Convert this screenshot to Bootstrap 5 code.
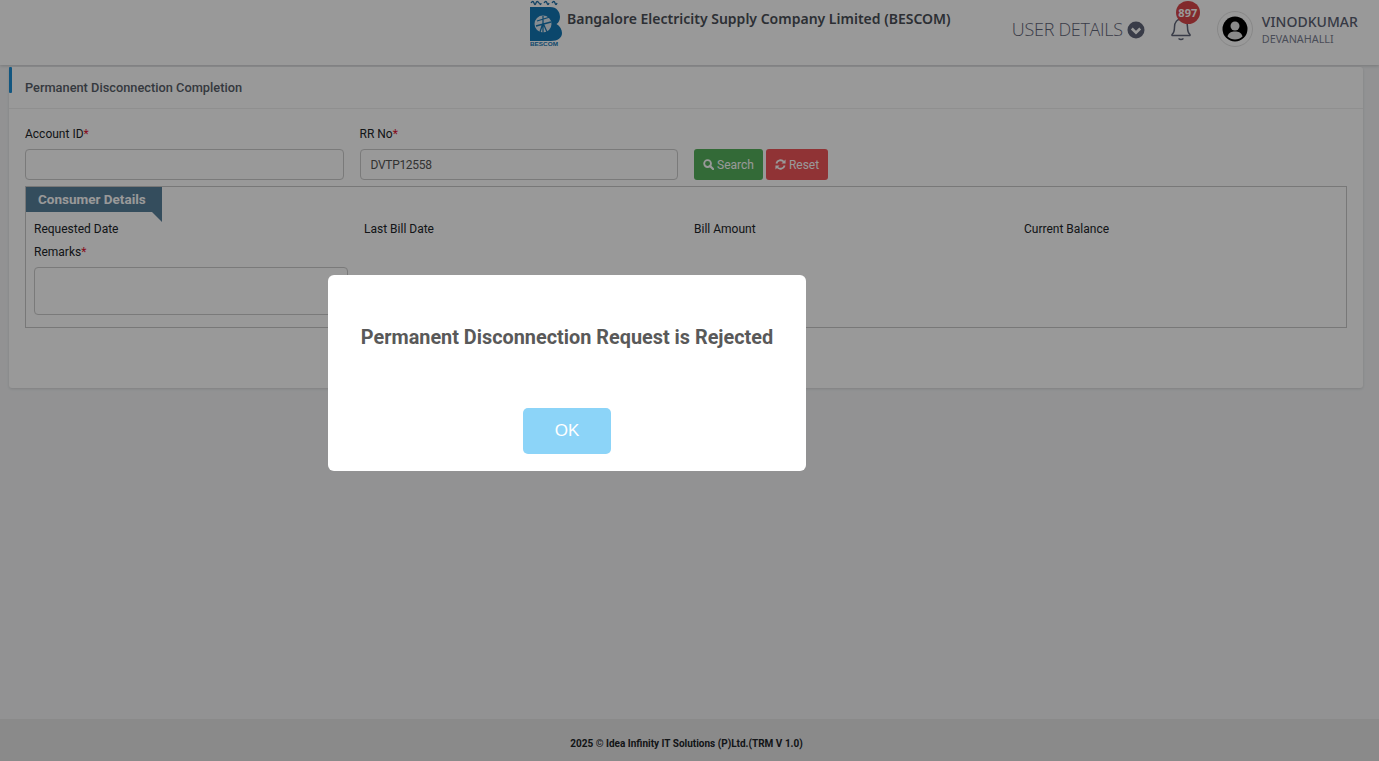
<!DOCTYPE html>
<html lang="en">
<head>
<meta charset="utf-8">
<title>Permanent Disconnection Completion</title>
<link href="https://cdn.jsdelivr.net/npm/bootstrap@5.3.0/dist/css/bootstrap.min.css" rel="stylesheet">
<style>
html,body{height:100%;}
body{background:#f3f4f6;font-family:Roboto,sans-serif;color:#212529;font-size:12px;overflow:hidden;}
.shell{height:761px;}
.topbar{height:65px;background:#fff;box-shadow:0 1px 3px rgba(0,0,0,.18);padding-left:530px;padding-right:21px;}
.logo-box{width:32px;height:46px;flex:none;}
.org-name{font-family:"Noto Sans",sans-serif;font-weight:600;font-size:14px;color:#4a4f57;margin:11px 0 0 5px;line-height:16px;white-space:nowrap;}
.user-menu{font-family:"Open Sans",sans-serif;font-size:18px;font-weight:300;color:#5f6578;margin-top:17px;letter-spacing:-.3px;line-height:25px;height:25px;}
.bell-wrap{width:24px;height:40px;margin:15px 0 0 25px;position:relative;}
.bell-count{position:absolute;left:6px;top:-14px;width:24px;height:23px;border-radius:50%;background:#d9474a;color:#fff;font:700 11px/23px "Noto Sans",sans-serif;text-align:center;}
.avatar-ring{width:36px;height:36px;border-radius:50%;border:1px solid #e2e2e2;margin:11px 9px 0 23px;flex:none;}
.who{margin-top:13px;font-family:"Noto Sans",sans-serif;}
.who-name{font-size:14px;font-weight:500;color:#5a6072;line-height:17px;letter-spacing:.05px;}
.who-place{font-size:10.8px;color:#7b8092;line-height:14px;margin-top:2px;}
.panel-area{padding:2px 16px 0 9px;}
.panel{background:#fff;border:0;border-radius:3px;box-shadow:0 1px 3px rgba(0,0,0,.12);height:321px;}
.panel-head{height:42px;border-bottom:1px solid #eee;padding:12px 16px 0;font:500 12.800px/17px Roboto,sans-serif;color:#596069;position:relative;}
.panel-head::before{content:"";position:absolute;left:0;top:0;width:3px;height:26px;background:#1f8fd6;border-radius:1px;}
.panel-main{padding:16px 16px 0;}
.field-label{font:400 12px/17px Roboto,sans-serif;color:#212529;padding-top:1px;margin-bottom:6px;display:block;}
.req{color:#e01030;}
.box-input{height:31px;border:1px solid #ccc;border-radius:4px;font:400 12px Roboto,sans-serif;letter-spacing:-.3px;padding:0 10px;color:#555;background:#fff;}
.search-row{--bs-gutter-x:16px;}
.act{height:31px;font:400 12px/33px Roboto,sans-serif;padding:0;border:0;border-radius:3px;color:#fff;margin-top:24px;}
.act-go{width:69px;background:#55b15c;margin-right:3px;}
.act-clear{width:62px;background:#f15559;}
.act svg{vertical-align:-1px;margin-right:3px;}
.details-box{border:1px solid #c9c9c9;height:142px;margin-top:6px;padding:0 8px;}
.tab-title{width:136px;height:25px;margin:0 0 0 -8px;background:#58809b;color:#fff;font:700 13.500px/24px Roboto,sans-serif;padding-left:12px;position:relative;}
.tab-title::after{content:"";position:absolute;left:126px;top:25px;border-top:10px solid #58809b;border-left:10px solid transparent;}
.detail-row{--bs-gutter-x:16px;margin-top:9px;}
.detail-name{font:400 12px/17px Roboto,sans-serif;color:#212529;}
.remark-label{margin:5px 0 6px;}
.remark-box{display:block;width:314px;height:48px;border:1px solid #ccc;border-radius:4px;background:#fff;resize:none;}
.foot{height:42px;margin-top:auto;background:#e6e6e6;text-align:center;font:700 10px/50px Roboto,sans-serif;color:#212529;}
.foot span{position:relative;left:-3px;}
.shade{position:fixed;inset:0;background:#000;opacity:.4;z-index:1050;}
.alert-box{position:absolute;left:328px;top:275px;width:478px;height:196px;background:#fff;border-radius:6px;z-index:1060;text-align:center;}
.alert-msg{font:700 19.850px/26px Roboto,sans-serif;color:#595959;margin:50px 0 0;}
.alert-ok{width:88px;height:46px;margin-top:57px;background:#8cd4f8;color:#fff;border:0;border-radius:5px;font:400 17px/46px "Liberation Sans",sans-serif;padding:0;}
</style>
</head>
<body>
<div class="shell d-flex flex-column">
  <header class="topbar d-flex">
    <div class="logo-box">
      <svg width="32" height="46" viewBox="0 0 32 46">
        <path d="M1 3q2-3 3 0t2 0 3 0 2 0M14 3q2-3 3 0t2 0M22 3q2-3 3 0t2 0" fill="none" stroke="#1c6fa8" stroke-width="1.300"/>
        <path d="M0 7H20C27 7 30 12 30 17C30 20 28.500 23 26.500 24C30 26 32 29.500 32 33C32 37.500 28 41 21 41H0Z" fill="#1377b5"/>
        <circle cx="13" cy="24" r="8.500" fill="#dfeaf2"/>
        <path d="M13 16V37M7 21L20 17M6 26L21 22M10 32L13 23L17 32" fill="none" stroke="#1377b5" stroke-width="1.300"/>
        <text x="0" y="46" font-family="Liberation Sans" font-size="6" font-weight="700" fill="#1377b5" textLength="28" lengthAdjust="spacingAndGlyphs">BESCOM</text>
      </svg>
    </div>
    <div class="org-name">Bangalore Electricity Supply Company Limited (BESCOM)</div>
    <div class="ms-auto user-menu d-flex align-items-center gap-1">USER DETAILS
      <svg width="18" height="18" viewBox="0 0 18 18"><circle cx="9" cy="9" r="8.500" fill="#5f6578"/><path d="M4.800 7.500L9 11.700L13.200 7.500" fill="none" stroke="#fff" stroke-width="2.600"/></svg>
    </div>
    <div class="bell-wrap">
      <svg width="24" height="26" viewBox="0 0 24 26"><path d="M2 19.500C4 18 4.500 16 4.500 12C4.500 7 7.500 4 11 4S17.500 7 17.500 12C17.500 16 18 18 20 19.500V20.500H2Z" fill="none" stroke="#5f6578" stroke-width="1.500" stroke-linejoin="round"/><path d="M8.500 23.500Q11 25.500 13.500 23.500" fill="none" stroke="#5f6578" stroke-width="1.500"/></svg>
      <span class="bell-count">897</span>
    </div>
    <div class="avatar-ring d-flex align-items-center justify-content-center">
      <svg width="26" height="26" viewBox="0 0 26 26"><circle cx="13" cy="13" r="12.500" fill="#000"/><circle cx="13" cy="10" r="4.500" fill="#e8e8e8"/><path d="M5.500 20.500C6.500 16.500 9.500 15.500 13 15.500S19.500 16.500 20.500 20.500C18.500 22.500 16 23.500 13 23.500S7.500 22.500 5.500 20.500Z" fill="#e8e8e8"/></svg>
    </div>
    <div class="who">
      <div class="who-name">VINODKUMAR</div>
      <div class="who-place">DEVANAHALLI</div>
    </div>
  </header>

  <main class="panel-area">
    <section class="card panel">
      <div class="panel-head">Permanent Disconnection Completion</div>
      <div class="panel-main">
        <div class="row search-row">
          <div class="col-3">
            <label class="field-label" for="acc">Account ID<span class="req">*</span></label>
            <input id="acc" class="form-control box-input" type="text">
          </div>
          <div class="col-3">
            <label class="field-label" for="rr">RR No<span class="req">*</span></label>
            <input id="rr" class="form-control box-input" type="text" value="DVTP12558">
          </div>
          <div class="col-6 d-flex align-items-start">
            <button class="btn act act-go" type="button"><svg width="11" height="11" viewBox="0 0 12 12"><circle cx="5" cy="5" r="3.700" fill="none" stroke="#fff" stroke-width="2"/><path d="M7.800 7.800L11 11" stroke="#fff" stroke-width="2.400" stroke-linecap="round"/></svg>Search</button>
            <button class="btn act act-clear" type="button"><svg width="11" height="11" viewBox="0 0 12 12"><path d="M1.500 5A4.700 4.700 0 0 1 9.600 3" fill="none" stroke="#fff" stroke-width="2"/><path d="M11.500 .5V5H7Z" fill="#fff"/><path d="M10.500 7A4.700 4.700 0 0 1 2.400 9" fill="none" stroke="#fff" stroke-width="2"/><path d="M.5 11.500V7H5Z" fill="#fff"/></svg>Reset</button>
          </div>
        </div>
        <div class="details-box">
          <div class="tab-title">Consumer Details</div>
          <div class="row detail-row">
            <div class="col-3 detail-name">Requested Date</div>
            <div class="col-3 detail-name">Last Bill Date</div>
            <div class="col-3 detail-name">Bill Amount</div>
            <div class="col-3 detail-name">Current Balance</div>
          </div>
          <label class="field-label remark-label" for="rem">Remarks<span class="req">*</span></label>
          <textarea id="rem" class="remark-box"></textarea>
        </div>
      </div>
    </section>
  </main>

  <footer class="foot"><span>2025 © Idea Infinity IT Solutions (P)Ltd.(TRM V 1.0)</span></footer>
</div>

<div class="shade"></div>
<div class="alert-box" role="dialog">
  <p class="alert-msg">Permanent Disconnection Request is Rejected</p>
  <button class="alert-ok" type="button">OK</button>
</div>
<script src="https://cdn.jsdelivr.net/npm/bootstrap@5.3.0/dist/js/bootstrap.bundle.min.js"></script>
</body>
</html>
